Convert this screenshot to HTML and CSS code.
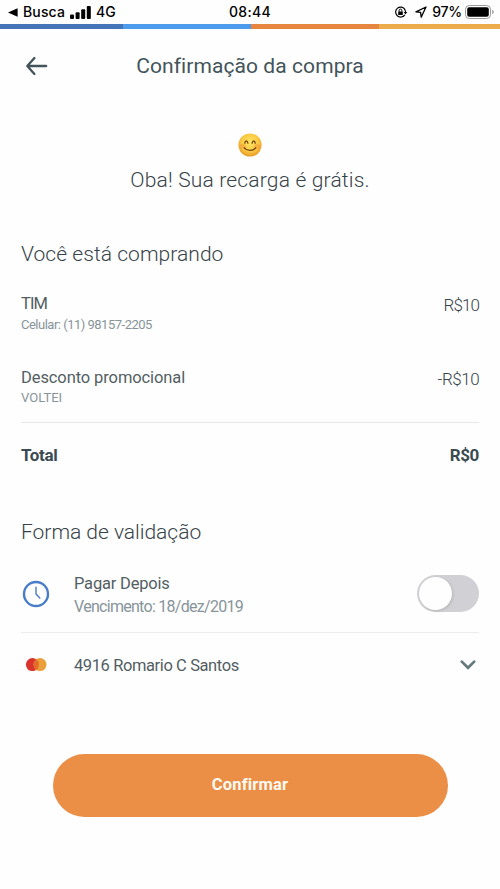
FILE: index.html
```html
<!DOCTYPE html>
<html lang="pt-BR">
<head>
<meta charset="utf-8">
<title>Confirmação da compra</title>
<link rel="stylesheet" href="styles.css">
</head>
<body>
<div class="status">
  <div class="status-left">
    <svg width="10" height="9" viewBox="0 0 10 9"><path d="M0 4.5 9.6.2v8.6z"/></svg>
    <span class="carrier">Busca</span>
    <svg class="signal" width="21" height="13" viewBox="0 0 21 13"><rect y="8.5" width="4" height="4.5" rx="1"/><rect x="5.6" y="6.2" width="4" height="6.8" rx="1"/><rect x="11.2" y="3.3" width="4" height="9.7" rx="1"/><rect x="16.8" width="4" height="13" rx="1"/></svg>
    <span class="network">4G</span>
  </div>
  <span class="clock">08:44</span>
  <div class="status-right">
    <svg class="lock" width="14" height="12" viewBox="0 0 14 12"><path d="M10.8 8.8A5 5 0 1 1 11 3.6" fill="none" stroke="#000" stroke-width="1.2"/><path d="M10.7 3.5A5 5 0 0 1 11.5 6" fill="none" stroke="#000" stroke-width="1.2"/><path d="M9.7 6h3.6l-1.8 2.5z"/><rect x="4.2" y="5.5" width="4.6" height="3.4" rx=".5"/><path d="M5.1 5.8V4.5a1.4 1.4 0 0 1 2.8 0v1.3" fill="none" stroke="#000"/></svg>
    <svg class="locate" width="12" height="12" viewBox="0 0 12 12"><path d="M11 1 .9 5.8l4.7.6.6 4.8z" fill="none" stroke="#000" stroke-width="1.3" stroke-linejoin="round"/></svg>
    <span class="percent">97%</span>
    <svg class="battery" width="29" height="14" viewBox="0 0 29 14"><rect x=".5" y=".5" width="25" height="13" rx="3.8" fill="#fff" stroke="#999"/><rect x="2.2" y="2.2" width="21.6" height="9.6" rx="2"/><path d="M27.2 4.8c2 .7 2 3.7 0 4.4z" fill="#999"/></svg>
  </div>
</div>
<div class="stripe"><i class="navy"></i><i class="blue"></i><i class="orange"></i><i class="yellow"></i></div>
<header class="header">
  <svg class="back" width="22" height="20" viewBox="0 0 22 20"><path d="M20.2 10H1.5M8.4 2 1.3 10l7.1 8" fill="none" stroke="#43545a" stroke-width="2.3" stroke-linecap="round" stroke-linejoin="round"/></svg>
  <h1 class="title">Confirmação da compra</h1>
</header>
<main class="content">
  <section class="hero">
    <svg class="emoji" width="24" height="24" viewBox="0 0 24 24">
      <defs><radialGradient id="face" cx=".5" cy=".4" r=".6"><stop offset="0" stop-color="#ffe463"/><stop offset=".6" stop-color="#fccb45"/><stop offset="1" stop-color="#e69a24"/></radialGradient></defs>
      <circle cx="12" cy="12" r="11.6" fill="url(#face)"/>
      <ellipse cx="4.6" cy="13.3" rx="3.2" ry="2.4" fill="#f59a3c" opacity=".55"/><ellipse cx="19.4" cy="13.3" rx="3.2" ry="2.4" fill="#f59a3c" opacity=".55"/>
      <path d="M6.8 10.2c.5-3.2 2.5-3.2 3.1 0M14.1 10.2c.6-3.2 2.6-3.2 3.1 0M6.3 14.8c2.8 3.5 8.6 3.5 11.4 0" fill="none" stroke="#70420f" stroke-width="1.3" stroke-linecap="round"/>
    </svg>
    <p class="message">Oba! Sua recarga é grátis.</p>
  </section>
  <section class="order">
    <h2 class="heading buying">Você está comprando</h2>
    <div class="line">
      <div><p class="name tim">TIM</p><p class="note phone">Celular: (11) 98157-2205</p></div>
      <span class="price">R$10</span>
    </div>
    <div class="line discount">
      <div><p class="name promo">Desconto promocional</p><p class="note coupon">VOLTEI</p></div>
      <span class="price minus">-R$10</span>
    </div>
    <div class="total"><span class="total-label">Total</span><span class="total-value">R$0</span></div>
  </section>
  <section class="payment">
    <h2 class="heading method">Forma de validação</h2>
    <div class="later">
      <svg class="icon" width="28" height="28" viewBox="0 0 28 28" fill="none" stroke="#497dc8"><circle cx="14" cy="14" r="12" stroke-width="2.4"/><path d="M14 7.2V14l3.8 4" stroke-width="1.4" stroke-linecap="round"/></svg>
      <div class="grow later-text"><p class="name pay">Pagar Depois</p><p class="due">Vencimento: 18/dez/2019</p></div>
      <div class="switch"><div class="knob"></div></div>
    </div>
    <div class="card">
      <svg class="icon" width="28" height="14" viewBox="0 0 28 14"><circle cx="10.4" cy="6.6" r="6.5" fill="#d8342b"/><circle cx="18" cy="6.6" r="6.5" fill="#eb9f39"/><path d="M14.2 1.3a6.5 6.5 0 0 1 0 10.6 6.5 6.5 0 0 1 0-10.6" fill="#e36c2d"/></svg>
      <p class="name holder grow">4916 Romario C Santos</p>
      <svg class="chevron" width="16" height="10" viewBox="0 0 16 10"><path d="m1.8 1.6 6.2 6.2 6.2-6.2" fill="none" stroke="#63797c" stroke-width="2.7" stroke-linecap="round"/></svg>
    </div>
  </section>
  <button class="confirm"><span>Confirmar</span></button>
</main>
</body>
</html>
```

FILE: styles.css
```css
* { box-sizing: border-box; margin: 0; padding: 0; }
body { height: 889px; background: #fefefe; font-family: Roboto, "Liberation Sans", sans-serif; color: #364349; white-space: nowrap; overflow: hidden; }
svg { display: block; flex: none; }
.status { height: 24px; display: grid; grid-template-columns: 1fr auto 1fr; align-items: center; padding: 0 6px 0 8px; font: 500 14px/24px Inter, sans-serif; color: #000; }
.status-left, .status-right { display: flex; align-items: center; }
.status-right { justify-content: flex-end; }
.carrier { margin-left: 5px; letter-spacing: .15px; }
.signal { margin: 0 5px; }
.network { letter-spacing: -.1px; }
.clock { letter-spacing: .3px; margin-right: 2px; }
.lock { margin-right: 1px; }
.locate { margin: 0 5px 0 6px; }
.percent { letter-spacing: -.2px; }
.battery { margin-left: 3px; }
.stripe { height: 5px; display: grid; grid-template-columns: 123px 128px 128px 1fr; }
.navy { background: #4674b9; }
.blue { background: #4c9bed; }
.orange { background: #e78641; }
.yellow { background: #ecac4b; }
.header { height: 74px; display: grid; grid-template-columns: 48px 1fr 48px; align-items: center; }
.back { margin-left: 26px; }
.title { font-size: 21px; font-weight: 400; text-align: center; color: #43545a; letter-spacing: .08px; }
.content { padding: 30px 21px 0; }
.hero { height: 108px; display: flex; flex-direction: column; align-items: center; }
.message { margin-top: 11px; font-size: 21px; font-weight: 300; line-height: 25px; letter-spacing: .18px; }
.heading { font-size: 21px; font-weight: 300; line-height: 26px; }
.line { height: 74px; display: flex; justify-content: space-between; align-items: flex-start; }
.buying { margin-bottom: 27px; letter-spacing: .05px; }
.name { font-size: 16.5px; font-weight: 400; line-height: 20px; color: #535e63; }
.tim { letter-spacing: -.9px; }
.promo { letter-spacing: -.1px; }
.note { font-size: 13px; line-height: 21px; color: #87949a; font-weight: 400; }
.phone { letter-spacing: -.5px; }
.coupon { letter-spacing: 0; line-height: 19px; }
.price { font-size: 17px; font-weight: 300; line-height: 23px; letter-spacing: -.9px; }
.minus { letter-spacing: -.4px; margin-right: -.4px; line-height: 22px; }
.discount { height: 55px; border-bottom: 1px solid #e6e7e8; }
.total { display: flex; justify-content: space-between; font-size: 17px; line-height: 22px; margin-top: 21px; font-weight: 700; color: #3b4b52; letter-spacing: -.35px; }
.payment { margin-top: 53px; }
.method { letter-spacing: -.02px; }
.later { height: 88px; padding-top: 10px; display: flex; align-items: center; border-bottom: 1px solid #ebeced; }
.later-text { padding-top: 5px; }
.pay { letter-spacing: -.2px; }
.icon { margin: 0 24px 0 1px; }
.grow { flex: 1; }
.due { font-size: 16px; line-height: 25px; font-weight: 400; color: #87949a; letter-spacing: -.71px; }
.switch { width: 62px; height: 37px; border-radius: 19px; background: #d1d1d5; padding: 2px; }
.knob { width: 33px; height: 33px; border-radius: 50%; background: #fefefe; box-shadow: 1px 1px 3px #0002; }
.card { height: 64px; display: flex; align-items: center; }
.holder { letter-spacing: -.4px; padding-top: 2px; }
.chevron { margin-right: 3px; }
.confirm { display: block; width: 395px; height: 63px; margin: 57px auto 0; border: 0; border-radius: 32px; background: #eb8e46; color: #fffaf2; font: 700 16.5px/62px Roboto, sans-serif; letter-spacing: .2px; }
.confirm span { display: block; height: 63px; }
```
